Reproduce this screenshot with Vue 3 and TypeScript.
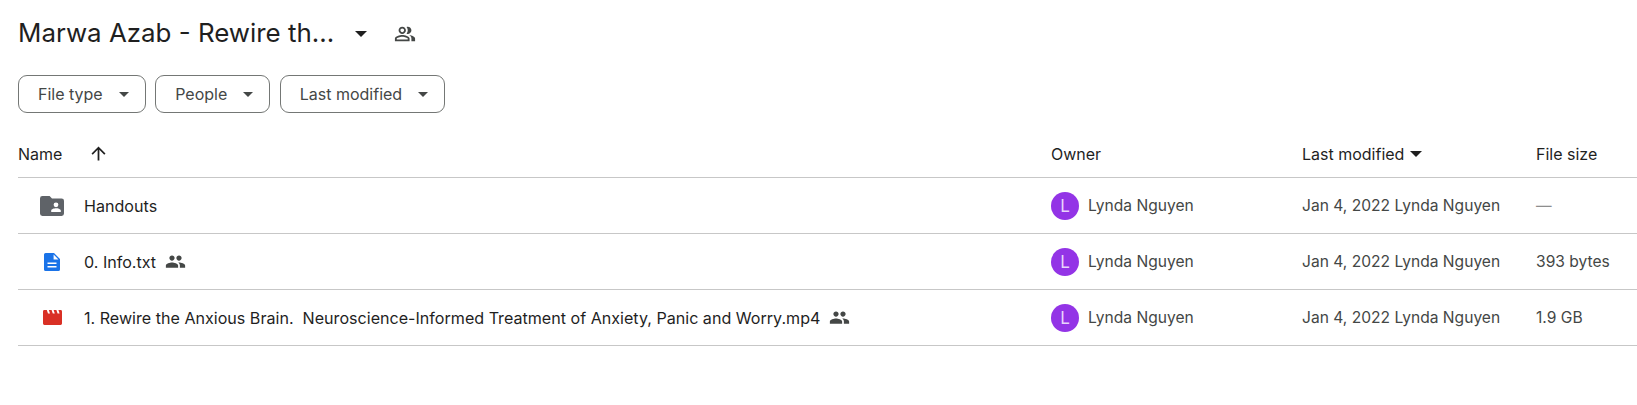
<script setup lang="ts">
interface Row {
  name: string
  kind: 'folder' | 'doc' | 'video'
  shared: boolean
  size: string
}

const filters = ['File type', 'People', 'Last modified']

const rows: Row[] = [
  { name: 'Handouts', kind: 'folder', shared: false, size: '—' },
  { name: '0. Info.txt', kind: 'doc', shared: true, size: '393 bytes' },
  {
    name: '1. Rewire the Anxious Brain.  Neuroscience-Informed Treatment of Anxiety, Panic and Worry.mp4',
    kind: 'video',
    shared: true,
    size: '1.9 GB',
  },
]
</script>

<template>
  <div class="page">
    <div class="title-row">
      <h1 class="title">Marwa Azab - Rewire th...</h1>
      <svg class="title-caret" viewBox="0 0 12 6"><path d="M0 0h12L6 6z" /></svg>
      <svg class="title-people" viewBox="0 0 24 24">
        <path
          d="M16.67 13.13C18.04 14.06 19 15.32 19 17v3h4v-3c0-2.18-3.57-3.47-6.33-3.87zM15 12c2.21 0 4-1.79 4-4s-1.79-4-4-4c-.47 0-.91.1-1.33.24C14.5 5.27 15 6.58 15 8s-.5 2.73-1.33 3.76c.42.14.86.24 1.33.24zM9 12c2.21 0 4-1.79 4-4s-1.79-4-4-4-4 1.79-4 4 1.79 4 4 4zm0-6c1.1 0 2 .9 2 2s-.9 2-2 2-2-.9-2-2 .9-2 2-2zm0 7c-2.67 0-8 1.34-8 4v3h16v-3c0-2.66-5.33-4-8-4zm6 5H3v-.99C3.2 16.29 6.3 15 9 15s5.8 1.29 6 2v1z"
        />
      </svg>
    </div>

    <div class="filters">
      <button v-for="f in filters" :key="f" class="chip">
        <span>{{ f }}</span>
        <svg class="chip-caret" viewBox="0 0 10 5"><path d="M0 0h10L5 5z" /></svg>
      </button>
    </div>

    <div class="grid head">
      <div class="name-head">
        <span>Name</span>
        <svg class="arrow" viewBox="0 0 24 24"><path d="M4 12l1.41 1.41L11 7.83V20h2V7.83l5.58 5.59L20 12l-8-8-8 8z" /></svg>
      </div>
      <div>Owner</div>
      <div class="mod-head">
        <span>Last modified</span>
        <svg class="mod-caret" viewBox="0 0 12 6"><path d="M0 0h12L6 6z" /></svg>
      </div>
      <div>File size</div>
    </div>

    <div v-for="r in rows" :key="r.name" class="grid row">
      <div class="name-cell">
        <span class="file-icon">
          <svg v-if="r.kind === 'folder'" class="ic-folder" viewBox="0 0 24 20">
            <path
              fill-rule="evenodd"
              d="M2.4 0h7.2l2.4 2.4h9.6A2.4 2.4 0 0 1 24 4.8v12.8a2.4 2.4 0 0 1-2.4 2.4H2.4A2.4 2.4 0 0 1 0 17.6V2.4A2.4 2.4 0 0 1 2.4 0zM16 6.4a2.4 2.4 0 1 0 0 4.8 2.4 2.4 0 0 0 0-4.8zM11.2 14.6v1.4h9.6v-1.4c0-1.6-3.2-2.4-4.8-2.4s-4.8.8-4.8 2.4z"
            />
          </svg>
          <svg v-else-if="r.kind === 'doc'" class="ic-doc" viewBox="0 0 16 18">
            <path
              fill-rule="evenodd"
              d="M1.6 0H10l6 6v10.4a1.6 1.6 0 0 1-1.6 1.6H1.6A1.6 1.6 0 0 1 0 16.4V1.6A1.6 1.6 0 0 1 1.6 0zM9.6 1.5v4.9h4.9zM3.5 9.4v1.6h9V9.4zM3.5 13v1.6h9V13z"
            />
          </svg>
          <svg v-else class="ic-video" viewBox="0 0 19 15">
            <path
              fill-rule="evenodd"
              d="M1.4 0h16.2A1.4 1.4 0 0 1 19 1.4v12.2a1.4 1.4 0 0 1-1.4 1.4H1.4A1.4 1.4 0 0 1 0 13.6V1.4A1.4 1.4 0 0 1 1.4 0zM3.8 0l1.2 3.4h2L5.8 0zM8.6 0l1.2 3.4h2L10.6 0zM13.4 0l1.2 3.4h2L15.4 0z"
            />
          </svg>
        </span>
        <span class="file-name">{{ r.name }}</span>
        <svg v-if="r.shared" class="shared" viewBox="0 0 24 24">
          <path
            d="M16 11c1.66 0 2.99-1.34 2.99-3S17.66 5 16 5s-3 1.34-3 3 1.34 3 3 3zm-8 0c1.66 0 2.99-1.34 2.99-3S9.66 5 8 5 5 6.34 5 8s1.34 3 3 3zm0 2c-2.33 0-7 1.17-7 3.5V19h14v-2.5c0-2.33-4.67-3.5-7-3.5zm8 0c-.29 0-.62.02-.97.05 1.16.84 1.97 1.97 1.97 3.45V19h6v-2.5c0-2.33-4.67-3.5-7-3.5z"
          />
        </svg>
      </div>
      <div class="owner-cell">
        <span class="avatar">L</span>
        <span>Lynda Nguyen</span>
      </div>
      <div class="mod-cell">Jan 4, 2022 Lynda Nguyen</div>
      <div class="size-cell" :class="{ empty: r.size === '—' }">{{ r.size }}</div>
    </div>
  </div>
</template>

<style>
html,
body {
  background: #fff;
}
</style>

<style scoped>
.page {
  width: 1637px;
  height: 405px;
  overflow: hidden;
  padding-left: 18px;
  box-sizing: border-box;
  font-family: Inter, Roboto, "Liberation Sans", sans-serif;
  color: #1f1f1f;
}
.title-row {
  display: flex;
  align-items: center;
  height: 67px;
}
.title {
  margin: 0 0 2px;
  font-size: 25.9px;
  font-weight: 400;
  line-height: 34px;
  width: 337px;
  white-space: nowrap;
}
.title-caret {
  width: 12px;
  height: 6px;
  fill: #1f1f1f;
}
.title-people {
  width: 22px;
  height: 22px;
  margin-left: 27px;
  fill: #444746;
}
.filters {
  display: flex;
  gap: 9.5px;
  margin-top: 8px;
}
.chip {
  display: flex;
  align-items: center;
  justify-content: space-between;
  height: 38px;
  padding: 0 16px 0 19px;
  border: 1px solid #747775;
  border-radius: 9px;
  background: #fff;
  color: #444746;
  font: 400 16px Inter, Roboto, "Liberation Sans", sans-serif;
  box-sizing: border-box;
}
.chip-caret {
  width: 10px;
  height: 5px;
  margin-left: 16px;
  fill: #444746;
}
.grid {
  display: grid;
  grid-template-columns: 1033px 251px 234px 1fr;
  align-items: center;
  border-bottom: 1px solid #c7c7c7;
  box-sizing: border-box;
  font-size: 15.6px;
}
.head {
  height: 65px;
  padding-top: 17px;
  color: #1f1f1f;
  font-size: 16px;
}
.row {
  height: 56px;
  color: #444746;
}
.name-head,
.mod-head,
.name-cell,
.owner-cell {
  display: flex;
  align-items: center;
}
.arrow {
  width: 21px;
  height: 21px;
  margin-left: 26px;
  fill: #1f1f1f;
}
.mod-caret {
  width: 12px;
  height: 6px;
  margin-left: 6px;
  fill: #1f1f1f;
}
.file-icon {
  display: flex;
  justify-content: center;
  width: 32px;
  margin-left: 18px;
  margin-right: 16px;
}
.ic-folder {
  width: 24px;
  height: 20px;
  fill: #5f6368;
}
.ic-doc {
  width: 16px;
  height: 18px;
  fill: #1a73e8;
}
.ic-video {
  width: 19px;
  height: 15px;
  fill: #d93025;
}
.file-name {
  color: #1f1f1f;
  font-size: 16.1px;
  white-space: pre;
}
.shared {
  width: 21px;
  height: 21px;
  margin-left: 9px;
  fill: #444746;
}
.avatar {
  display: flex;
  align-items: center;
  justify-content: center;
  width: 28px;
  height: 28px;
  margin-right: 9px;
  border-radius: 50%;
  background: #9334e6;
  color: #e9d5fb;
  font-size: 17px;
}
.size-cell,
.mod-cell {
  white-space: nowrap;
}
.empty {
  color: #8e8e8e;
}
</style>
